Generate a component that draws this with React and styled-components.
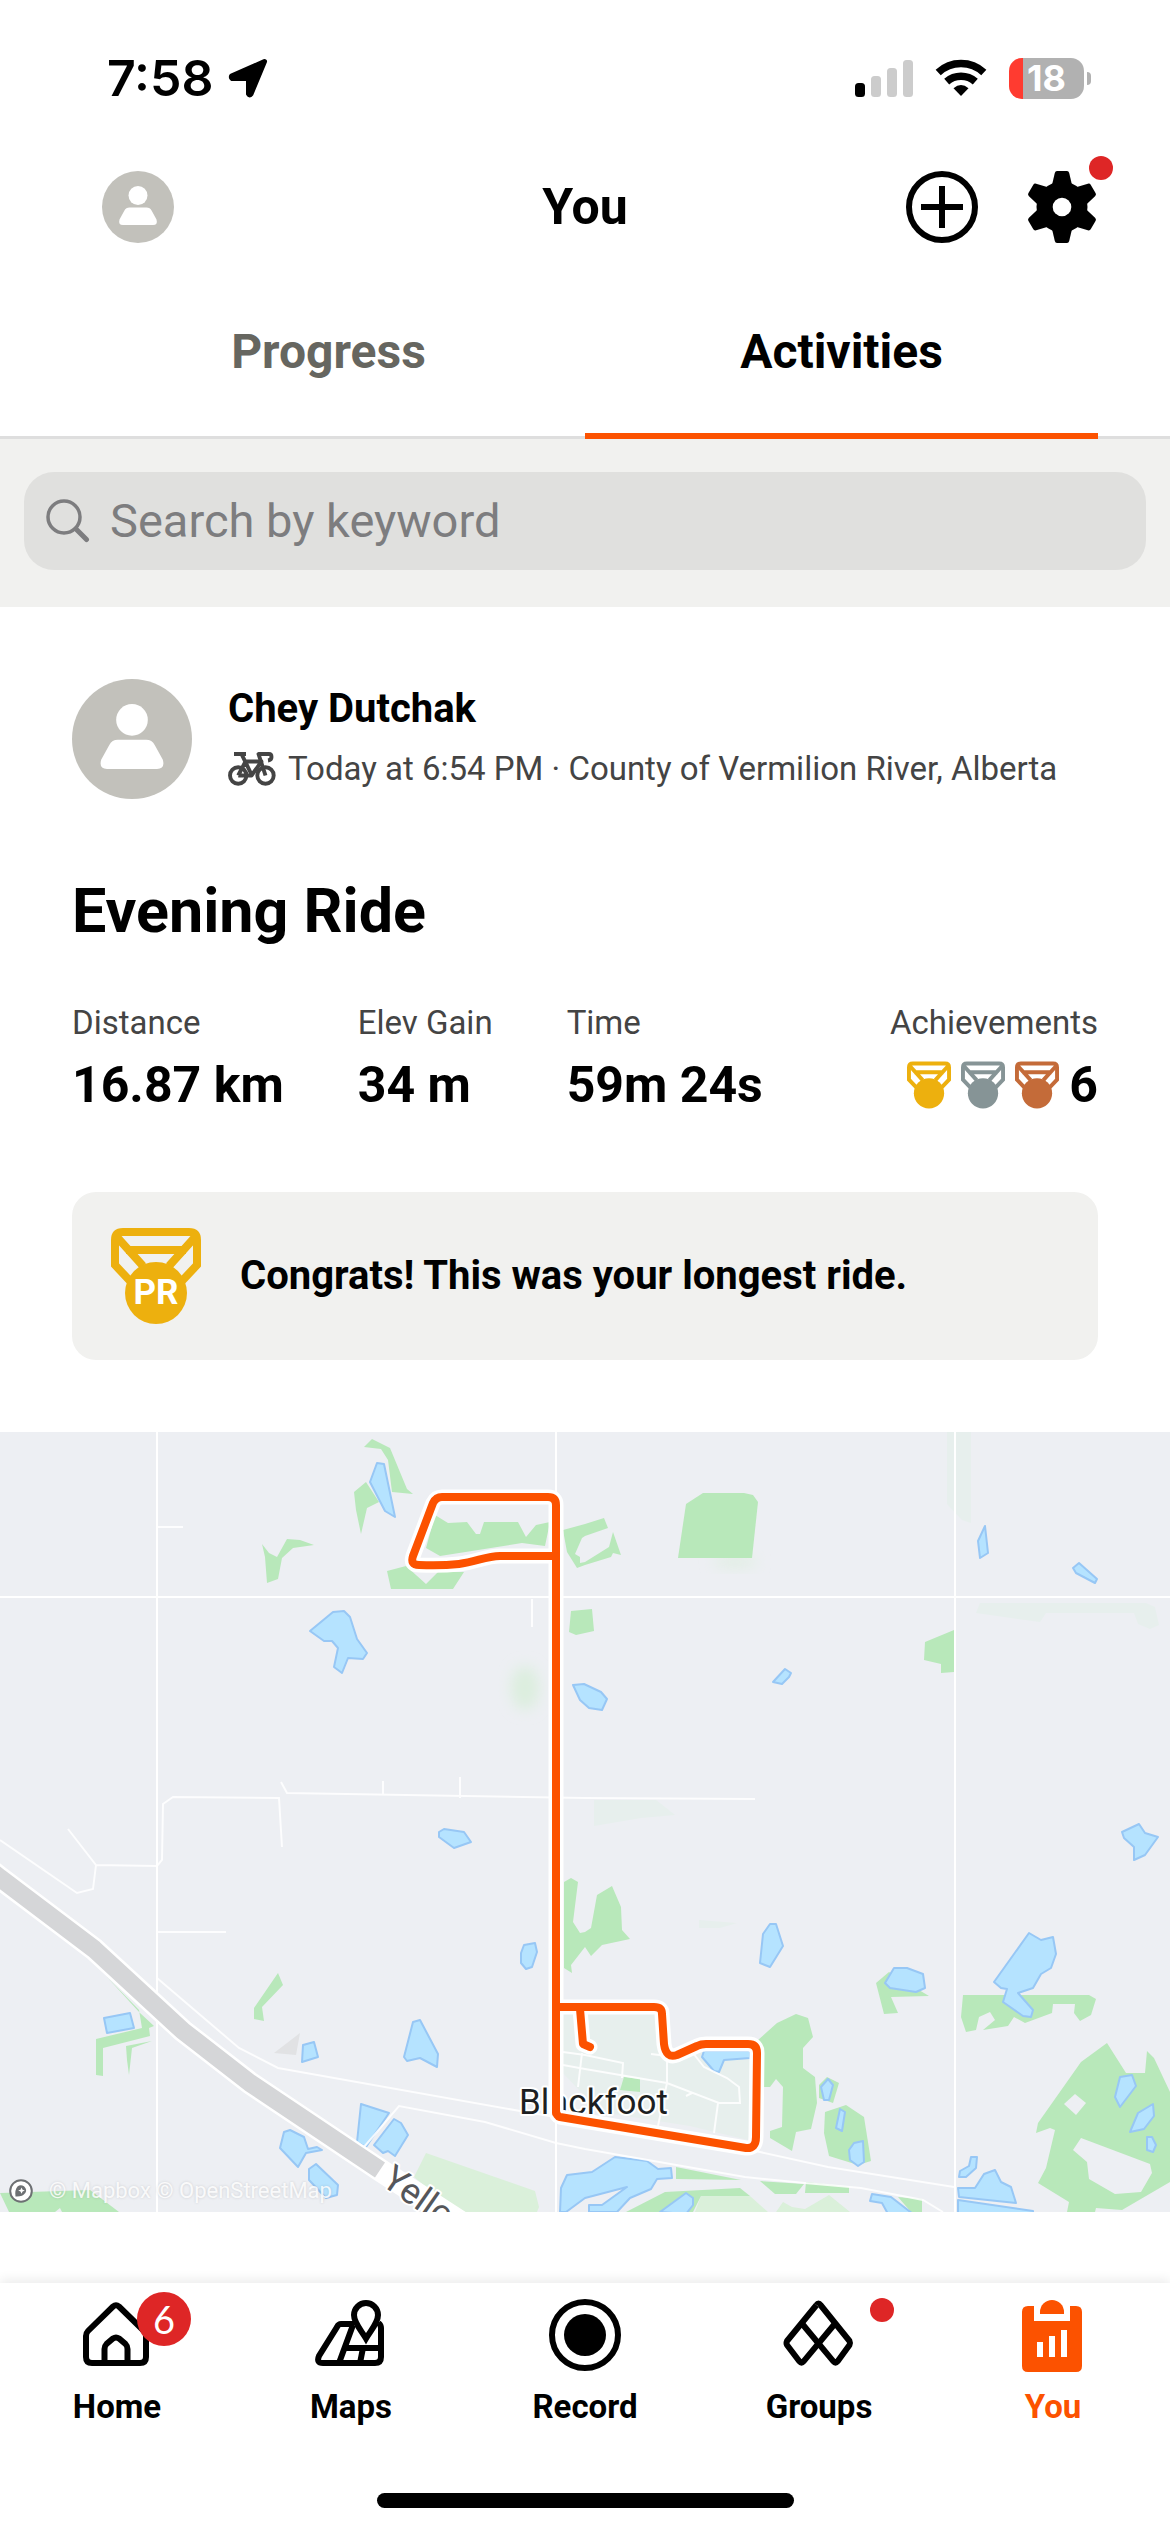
import React from 'react';
import styled, { createGlobalStyle, css } from 'styled-components';

const colors = {
  ink: '#000000',
  text: '#444444',
  muted: '#666660',
  placeholder: '#7d7d7f',
  orange: '#fc5200',
  red: '#de2626',
  gold: '#edb00e',
  silver: '#869496',
  bronze: '#c46b39',
  surface: '#f1f1ef',
  field: '#e0e0de',
  line: '#dedede',
  avatar: '#c2c1bb',
};

const GlobalStyle = createGlobalStyle`
  *, *::before, *::after {
    box-sizing: border-box;
  }

  body {
    margin: 0;
    background: #fff;
    color: ${colors.ink};
    font-family: Roboto, 'Liberation Sans', sans-serif;
  }

  h1, h2, p, dl, dd {
    margin: 0;
  }

  button, input {
    font-family: inherit;
  }
`;

const Page = styled.div`
  display: flex;
  flex-direction: column;
  min-height: 100vh;
`;

/* ---------- status bar ---------- */

const StatusBar = styled.div`
  display: flex;
  align-items: center;
  justify-content: space-between;
  height: 156px;
  padding: 0 79px 0 107px;
`;

const StatusGroup = styled.div`
  display: flex;
  align-items: center;
  gap: ${({ $gap }) => $gap}px;
`;

const Clock = styled.span`
  font-family: Inter, 'Liberation Sans', sans-serif;
  font-size: 50px;
  line-height: 60px;
  font-weight: 600;
`;

const Battery = styled.div`
  display: flex;
  align-items: center;
  gap: 3px;
`;

const BatteryBody = styled.div`
  width: 75px;
  height: 41px;
  border-radius: 13px;
  background: linear-gradient(to right, #ff3b30 14px, #b1b1b1 14px);
  color: #fff;
  font-family: Inter, 'Liberation Sans', sans-serif;
  font-size: 36px;
  font-weight: 700;
  line-height: 41px;
  text-align: center;
`;

const BatteryTip = styled.div`
  width: 4px;
  height: 13px;
  border-radius: 0 4px 4px 0;
  background: #b1b1b1;
`;

/* ---------- header ---------- */

const Header = styled.header`
  display: grid;
  grid-template-columns: 1fr auto 1fr;
  align-items: center;
  height: 102px;
  padding: 0 72px 0 102px;
`;

const HeaderTitle = styled.h1`
  padding-right: 30px;
  font-size: 50px;
  line-height: 60px;
  font-weight: 700;
`;

const HeaderActions = styled.div`
  display: flex;
  justify-content: flex-end;
  gap: 48px;
`;

const IconButton = styled.button`
  position: relative;
  display: block;
  width: 72px;
  height: 72px;
  padding: 0;
  border: 0;
  background: none;
  color: inherit;

  svg {
    display: block;
  }
`;

const Dot = styled.span`
  position: absolute;
  top: ${({ $top }) => $top}px;
  right: ${({ $right }) => $right}px;
  width: 24px;
  height: 24px;
  border-radius: 50%;
  background: ${colors.red};
`;

/* ---------- tabs ---------- */

const Tabs = styled.div`
  display: flex;
  padding: 0 72px;
  box-shadow: inset 0 -3px 0 ${colors.line};
`;

const Tab = styled.button`
  flex: 1;
  padding: 66px 0 53px;
  border: 0;
  border-bottom: 6px solid transparent;
  background: none;
  color: ${colors.muted};
  font-size: 48px;
  line-height: 56px;
  font-weight: 700;

  ${({ $active }) =>
    $active &&
    css`
      border-bottom-color: ${colors.orange};
      color: ${colors.ink};
    `}
`;

/* ---------- search ---------- */

const SearchSection = styled.div`
  padding: 33px 24px 37px;
  background: ${colors.surface};
`;

const SearchBox = styled.label`
  display: flex;
  align-items: center;
  gap: 20px;
  height: 98px;
  padding: 0 22px;
  border-radius: 30px;
  background: ${colors.field};
`;

const SearchInput = styled.input`
  flex: 1;
  min-width: 0;
  padding: 0;
  border: 0;
  outline: 0;
  background: none;
  font-size: 47px;
  line-height: 56px;

  &::placeholder {
    color: ${colors.placeholder};
    opacity: 1;
  }
`;

/* ---------- activity ---------- */

const ActivityBody = styled.div`
  padding: 72px 72px 0;
`;

const Athlete = styled.div`
  display: flex;
  align-items: center;
  gap: 36px;
`;

const AthleteText = styled.div`
  display: flex;
  flex-direction: column;
  gap: 12px;
`;

const AthleteName = styled.p`
  font-size: 40px;
  line-height: 48px;
  font-weight: 700;
`;

const AthleteMeta = styled.p`
  display: flex;
  align-items: center;
  gap: 12px;
  color: ${colors.text};
  font-size: 33px;
  line-height: 48px;
`;

const ActivityTitle = styled.h2`
  margin-top: 76px;
  font-size: 61px;
  line-height: 72px;
  font-weight: 700;
`;

const Stats = styled.dl`
  display: flex;
  gap: 74px;
  margin-top: 56px;
`;

const Stat = styled.div`
  display: flex;
  flex-direction: column;
  gap: 12px;

  &:last-child {
    align-items: flex-end;
    margin-left: auto;
  }
`;

const StatLabel = styled.dt`
  color: ${colors.text};
  font-size: 33px;
  line-height: 40px;
`;

const StatValue = styled.dd`
  display: flex;
  align-items: center;
  gap: 10px;
  font-size: 50px;
  line-height: 60px;
  font-weight: 700;
`;

const Congrats = styled.div`
  display: flex;
  align-items: center;
  gap: 39px;
  margin: 77px 0 72px;
  padding: 36px 39px;
  border-radius: 24px;
  background: ${colors.surface};
  font-size: 40px;
  line-height: 48px;
  font-weight: 700;
`;

const MapFrame = styled.div`
  position: relative;

  > svg {
    display: block;
    width: 100%;
    height: auto;
  }
`;

const Attribution = styled.p`
  position: absolute;
  left: 9px;
  bottom: 8px;
  display: flex;
  align-items: center;
  gap: 16px;
  color: rgba(255, 255, 255, 0.85);
  font-size: 22px;
  line-height: 26px;
  text-shadow: 0 0 3px rgba(0, 0, 0, 0.14);
`;

/* ---------- bottom navigation ---------- */

const BottomNav = styled.nav`
  margin-top: auto;
  padding: 16px 0 24px;
  background: #fff;
  box-shadow: 0 -4px 10px rgba(0, 0, 0, 0.07);
`;

const NavItems = styled.div`
  display: flex;
`;

const NavItem = styled.a`
  flex: 1;
  display: flex;
  flex-direction: column;
  align-items: center;
  gap: 16px;
  color: ${({ $active }) => ($active ? colors.orange : colors.ink)};
  font-size: 33px;
  line-height: 40px;
  font-weight: 700;
  text-decoration: none;
`;

const NavIcon = styled.span`
  position: relative;
  width: 72px;
  height: 72px;

  svg {
    display: block;
  }
`;

const Badge = styled.span`
  position: absolute;
  top: -7px;
  left: 56px;
  width: 54px;
  height: 54px;
  border-radius: 50%;
  background: ${colors.red};
  color: #fff;
  font-family: Lato, sans-serif;
  font-size: 38px;
  font-weight: 400;
  line-height: 54px;
  text-align: center;
`;

const HomeIndicator = styled.div`
  width: 417px;
  height: 15px;
  margin: 66px auto 0;
  border-radius: 8px;
  background: #000;
`;

/* ---------- icons ---------- */

const LocationArrow = () => (
  <svg width="40" height="40" viewBox="0 0 40 40" aria-hidden="true">
    <path
      d="M36.500 3.500 3.500 18Q3 20 4 20.500H20.500V36Q21.500 38 23 36Z"
      fill="#000"
      stroke="#000"
      strokeWidth="5"
      strokeLinejoin="round"
    />
  </svg>
);

const SignalIcon = () => (
  <svg width="58" height="37" viewBox="0 0 58 37" aria-hidden="true">
    <rect x="0" y="23" width="10" height="14" rx="3.500" fill="#000" />
    <rect x="16" y="16" width="10" height="21" rx="3.500" fill="#ccc" />
    <rect x="32" y="8" width="10" height="29" rx="3.500" fill="#ccc" />
    <rect x="48" y="0" width="10" height="37" rx="3.500" fill="#ccc" />
  </svg>
);

const WifiIcon = () => (
  <svg width="52" height="38" viewBox="0 0 52 38" aria-hidden="true">
    <g fill="none" stroke="#000" strokeWidth="7.500">
      <path d="M3.200 13.500A33.500 33.500 0 0 1 48.800 13.500" />
      <path d="M11.700 22.600A21.500 21.500 0 0 1 40.300 22.600" />
    </g>
    <path d="M26 37 18.500 29.200Q26 22.800 33.500 29.200Z" fill="#000" />
  </svg>
);

const AvatarIcon = ({ size }) => (
  <svg width={size} height={size} viewBox="0 0 72 72" aria-hidden="true">
    <circle cx="36" cy="36" r="36" fill={colors.avatar} />
    <circle cx="36" cy="24.500" r="9.500" fill="#fff" />
    <path
      d="M27.500 36.500H44.500Q48 36.500 49.700 39.700L54.500 48.500Q56 54 51 54H21Q16 54 17.500 48.500L22.300 39.700Q24 36.500 27.500 36.500Z"
      fill="#fff"
    />
  </svg>
);

const PlusIcon = () => (
  <svg width="72" height="72" viewBox="0 0 72 72" aria-hidden="true">
    <g fill="none" stroke="currentColor" strokeWidth="6">
      <circle cx="36" cy="36" r="33" />
      <path d="M36 15V57M15 36H57" />
    </g>
  </svg>
);

const GearIcon = () => (
  <svg width="72" height="72" viewBox="-36 -36 72 72" aria-hidden="true">
    <g fill="currentColor">
      {[0, 60, 120, 180, 240, 300].map((angle) => (
        <path
          key={angle}
          transform={`rotate(${angle})`}
          d="M-10 -22 -7.200 -34Q-6.700 -36 -5 -36H5Q6.700 -36 7.200 -34L10 -22Z"
        />
      ))}
      <circle r="25.500" />
    </g>
    <circle r="9.300" fill="#fff" />
  </svg>
);

const SearchIcon = () => (
  <svg width="44" height="44" viewBox="0 0 44 44" aria-hidden="true">
    <g fill="none" stroke={colors.placeholder} strokeLinecap="round">
      <circle cx="18" cy="18" r="16" strokeWidth="3.500" />
      <path d="M30 30 40.500 40.500" strokeWidth="5" />
    </g>
  </svg>
);

const BikeIcon = () => (
  <svg width="48" height="34" viewBox="0 0 48 34" aria-hidden="true">
    <g fill="none" stroke={colors.text} strokeWidth="3.900" strokeLinejoin="round">
      <circle cx="10.200" cy="23.500" r="8.200" />
      <circle cx="37.500" cy="23.500" r="8.200" />
      <path d="M6 2H18M13.500 2 23.500 22.500M10.200 23.500 17.500 9.500H33.500L23.500 23.500H10.200" />
      <path d="M37.500 23.500 30.500 2H41Q43.500 2 43.500 5Q43.500 8 40 8.500" />
    </g>
  </svg>
);

const MedalIcon = ({ width, height, color, label }) => (
  <svg width={width} height={height} viewBox="0 0 90 96" aria-hidden="true">
    <g fill="none" stroke={color} strokeWidth="8">
      <path d="M20 54 4 37V12Q4 4 12 4H78Q86 4 86 12V37L70 54" />
      <path d="M5 8 32 38M85 8 58 38M15 22H75" />
    </g>
    <circle cx="45" cy="65" r="31" fill={color} />
    {label && (
      <text
        x="45"
        y="76"
        textAnchor="middle"
        fill="#fff"
        fontFamily="Roboto, sans-serif"
        fontSize="35"
        fontWeight="700"
      >
        {label}
      </text>
    )}
  </svg>
);

const HomeIcon = () => (
  <svg width="72" height="72" viewBox="0 0 72 72" aria-hidden="true">
    <g fill="none" stroke="currentColor" strokeWidth="6">
      <path d="M5 37Q5 34 7 32L32 7.500Q35 5 38 7.500L63 32Q65 34 65 37V58Q65 64 59 64H11Q5 64 5 58Z" />
      <path d="M23.500 64V50Q23.500 47 25.500 45L32 39.500Q35 37.500 38 39.500L44.500 45Q46.500 47 46.500 50V64" />
    </g>
  </svg>
);

const MapsIcon = () => (
  <svg width="72" height="72" viewBox="0 0 72 72" aria-hidden="true">
    <g fill="none" stroke="currentColor" strokeWidth="6">
      <path d="M39 25H26Q23.500 25 22 28L4 57Q1 64 8 64H60Q66 64 66 58V29Q66 26 63.500 24" />
      <path d="M38 26 24 64M30 49H66M48 49 45 64" />
      <path d="M51 39.500C46 31 39 24 39 16A12 12 0 0 1 63 16C63 24 56 31 51 39.500Z" />
    </g>
  </svg>
);

const RecordIcon = () => (
  <svg width="72" height="72" viewBox="0 0 72 72" aria-hidden="true">
    <circle cx="36" cy="36" r="33" fill="none" stroke="currentColor" strokeWidth="6" />
    <circle cx="36" cy="36" r="21" fill="currentColor" />
  </svg>
);

const GroupsIcon = () => (
  <svg width="72" height="72" viewBox="0 0 72 72" aria-hidden="true">
    <g fill="none" stroke="currentColor" strokeWidth="6" strokeLinejoin="round">
      <path d="M33.500 6Q35.500 3 37.500 6L66.500 42Q67.500 44 66.500 46L54.500 62.500Q52.500 65 50.500 62.500L18.500 24" />
      <path d="M33.500 6 4 42Q3 44 4 46L16.500 62.500Q18.500 65 20.500 62.500L52.500 24" />
    </g>
  </svg>
);

const YouIcon = () => (
  <svg width="72" height="74" viewBox="0 0 72 74" aria-hidden="true">
    <path
      d="M11 7H17V22H53V7H59Q65 7 65 13V67Q65 73 59 73H11Q5 73 5 67V13Q5 7 11 7Z"
      fill="currentColor"
    />
    <path d="M23 15V13A12 12 0 0 1 47 13V15Z" fill="currentColor" />
    <path d="M20 43H26V58H20ZM32 37H38V58H32ZM44 31H50V58H44Z" fill="#fff" />
  </svg>
);

/* ---------- map ---------- */

const woods = [
  '364,15 372,7 390,16 407,57 413,62 392,60 388,28 381,17',
  '354,60 366,50 379,70 367,76 361,102 356,78',
  '262,112 269,121 277,125 287,107 300,108 314,113 293,116 282,126 278,147 267,151 265,125',
  '435,83 448,91 467,90 476,102 480,102 484,90 518,90 526,105 536,93 550,90 545,114 522,111 440,124 426,116',
  '387,139 406,134 426,152 438,140 464,140 453,157 391,157',
  '563,98 585,92 604,86 608,96 585,104 582,106 575,122 580,125 580,131 585,130 609,115 613,100 621,123 613,121 611,125 585,133 577,136 567,120',
  '571,179 592,177 594,199 576,203 569,200',
  '703,61 744,61 753,63 758,70 752,126 678,126 686,72',
  '954,198 925,210 924,228 941,232 941,241 954,240',
  '106,544 140,581 154,594 149,596 150,604 103,616 103,644 96,643 96,607 142,596 139,578',
  '126,614 152,609 132,616 129,643 127,628',
  '278,541 283,553 262,575 264,589 254,587 254,576',
  '0,761 90,758 119,780 62,780 60,776 55,780 9,780',
  '564,450 571,446 578,450 573,490 580,501 585,500 591,496 597,463 612,454 621,475 622,498 630,507 602,513 591,524 585,515 571,533 572,541 564,536',
  '876,551 889,540 929,564 891,565 898,581 884,582',
  '963,563 1089,563 1096,567 1091,583 1080,589 1074,581 1075,572 1053,572 1052,581 1025,591 1014,585 1008,594 983,598 995,588 990,580 979,585 976,598 966,600 961,585',
  '1107,611 1126,641 1145,641 1147,619 1154,626 1170,660 1170,750 1122,778 1096,776 1095,780 1067,780 1069,770 1038,751 1046,736 1055,698 1050,696 1036,701 1038,691 1081,630',
  '796,582 808,586 813,605 803,616 803,636 815,645 817,671 811,697 796,700 792,719 770,706 770,699 782,695 783,655 776,647 770,655 763,655 758,608 777,591',
  '827,645 839,651 833,671 819,666 819,653',
  '846,673 864,685 871,729 858,733 829,724 824,701 825,680',
  '624,645 640,647 640,660 620,658',
  '676,735 741,748 676,747',
  '760,749 804,752 796,762 775,762',
  '806,750 849,755 849,761 805,761',
  '626,780 665,760 740,756 750,764 701,764 693,780',
  '898,765 922,767 922,780 911,780',
];

const clearings = [
  '1064,672 1075,662 1086,671 1076,683',
  '1081,706 1150,732 1152,741 1141,760 1115,762 1089,747 1087,730 1073,718',
];

const meadows = [
  '426,721 535,759 539,775 537,780 455,780 414,745',
  '701,764 750,764 768,780 695,780',
  '776,780 783,770 792,775 805,777 829,763 850,780',
];

const faint = [
  '947,0 971,0 971,91 962,88 947,72',
  '976,181 980,171 1146,171 1155,175 1159,193 1150,197 1138,192 1134,181 1046,181 1040,190',
  '594,368 656,368 675,383 641,386 594,394',
  '699,488 737,491 720,496 699,496',
  '562,580 655,580 662,628 704,618 750,618 752,700 748,708 690,694 600,680 562,640',
];

const lakes = [
  '377,31 384,32 395,85 385,79 370,50',
  '310,199 333,180 344,179 350,185 357,207 367,221 363,227 348,226 342,241 334,235 338,216 332,209 324,209',
  '439,400 444,397 464,400 471,410 454,416 439,405',
  '573,253 584,252 601,260 607,267 602,278 589,276 580,268',
  '785,237 791,241 789,245 782,252 773,250',
  '985,94 988,121 980,126 978,109',
  '1079,131 1097,147 1095,151 1076,141 1073,136',
  '1122,400 1139,392 1145,401 1158,405 1145,423 1134,428 1134,415 1124,406',
  '104,586 130,581 134,596 107,601',
  '303,613 314,610 318,625 302,630',
  '413,590 420,588 438,622 437,635 420,626 407,629 404,625',
  '524,513 535,511 537,520 532,535 526,537 521,531 521,521',
  '361,672 389,681 366,715 357,710',
  '394,687 401,691 408,703 395,724 388,719 383,721 374,713',
  '284,700 290,698 304,705 308,717 317,715 322,718 306,721 298,735 280,716',
  '309,737 316,732 338,753 337,763 326,766 309,748',
  '560,780 561,756 567,743 592,740 615,725 647,729 658,737 671,736 672,746 657,747 651,757 630,766 617,780 589,780 589,773 602,773 627,755 585,766 566,780',
  '770,492 776,492 783,514 770,535 760,531 763,502',
  '894,536 907,536 923,542 925,556 916,560 890,556 885,551',
  '1029,501 1041,508 1053,505 1056,522 1051,536 1041,542 1033,556 1018,561 1033,578 1031,585 1023,584 1003,570 1007,557 1001,556 994,550',
  '1120,645 1132,643 1136,654 1120,675 1115,665',
  '1153,672 1154,684 1144,697 1130,700 1138,681',
  '1147,705 1152,705 1156,713 1153,720 1147,718',
  '971,725 977,725 976,736 966,745 959,745 960,739 969,734',
  '958,756 975,756 984,742 995,738 1001,750 1011,755 1016,771 959,765',
  '958,768 1033,779 1033,784 958,784',
  '828,647 833,653 829,668 824,668 821,655',
  '840,677 845,680 842,699 836,696',
  '863,709 864,730 858,734 850,728 849,718 854,711',
  '704,619 750,619 750,626 724,628 719,640 714,639 702,625',
  '660,780 686,761 693,766 693,773 686,782',
  '872,762 891,765 913,782 888,782 882,771 870,769',
];

const mainRoads = 'M157 0V780M0 165H1170M556 0V780M955 0V780';

const lanes = [
  'M158 95H183M532 167V195M281 350 287 361 585 366 755 367M383 349V362M460 345V366',
  'M282 415 279 366 173 365 163 372 162 428 157 434 96 433 68 397M96 433 93 457 77 461 0 408',
  'M157 500H226M157 546 239 616 278 636 520 679 585 690 760 720 828 735 954 755',
  'M364 715 399 674 485 690 556 711 585 717 745 745 805 751 861 756 923 768 943 780',
  'M563 620 585 623 623 631 622 646M563 633 585 637 667 651 719 671H740L739 655 727 646 704 635 693 621',
  'M651 622 667 624V651L658 694M718 671 714 701M582 621 578 655M692 661 686 664',
].join('');

const highway = 'M-10 438 0 446 94 517 183 599 250 651 380 738';

const route =
  'M556 681V73Q556 65 548 65H442Q436 65 433 71L413 124Q410 133 419 133Q441 134 459 132C476 130 486 124 500 124H556' +
  'M556 575H654Q662 575 662 582L664 612Q666 627 677 623L697 614Q701 612 706 612H748Q757 612 757 621L756 705Q756 717 746 716L560 685Q556 684 556 678';

const spur = 'M580 577 583 612 590 615';

const RouteMap = () => (
  <svg viewBox="0 0 1170 780" role="img" aria-label="Ride route">
    <defs>
      <filter id="haze" x="-50%" y="-50%" width="200%" height="200%">
        <feGaussianBlur stdDeviation="7" />
      </filter>
    </defs>
    <rect width="1170" height="780" fill="#edeff3" />
    <g fill="#e7efed">
      {faint.map((points) => (
        <polygon key={points} points={points} />
      ))}
    </g>
    <ellipse cx="525" cy="256" rx="14" ry="22" fill="#dceede" filter="url(#haze)" />
    <ellipse cx="735" cy="130" rx="22" ry="6" fill="#e0eee2" filter="url(#haze)" />
    <g fill="#daf0da">
      {meadows.map((points) => (
        <polygon key={points} points={points} />
      ))}
    </g>
    <g fill="#b8e8ba">
      {woods.map((points) => (
        <polygon key={points} points={points} />
      ))}
    </g>
    <g fill="#edeff3">
      {clearings.map((points) => (
        <polygon key={points} points={points} />
      ))}
    </g>
    <polygon points="300,601 296,623 274,621" fill="#e1e2e4" />
    <g fill="#b5e3ff" stroke="#97c7f5" strokeWidth="2" strokeLinejoin="round">
      {lakes.map((points) => (
        <polygon key={points} points={points} />
      ))}
    </g>
    <g fill="none" stroke="#fff">
      <path d={lanes} strokeWidth="2" opacity="0.85" />
      <path d={mainRoads} strokeWidth="2" />
      <path d={`${highway} 460 790`} strokeWidth="23" strokeLinejoin="round" />
      <path d={highway} stroke="#d5d6d8" strokeWidth="18" strokeLinejoin="round" />
    </g>
    <g
      fontFamily="Roboto, sans-serif"
      stroke="#fff"
      strokeWidth="4"
      strokeLinejoin="round"
      paintOrder="stroke"
    >
      <text transform="translate(380 752) rotate(35)" fontSize="36" fill="#55565a">
        Yello
      </text>
      <text x="519" y="682" fontSize="35" fill="#1d1f22">
        Blackfoot
      </text>
    </g>
    <g fill="none" stroke="#fff" strokeWidth="15" strokeLinejoin="round" strokeLinecap="round">
      <path d={route} />
      <path d={spur} />
    </g>
    <g
      fill="none"
      stroke={colors.orange}
      strokeWidth="8"
      strokeLinejoin="round"
      strokeLinecap="round"
    >
      <path d={route} />
      <path d={spur} />
    </g>
  </svg>
);

const MapboxMark = () => (
  <svg width="24" height="24" viewBox="0 0 24 24" aria-hidden="true">
    <circle cx="12" cy="12" r="10.800" fill="#fff" stroke="#6d7073" strokeWidth="2" />
    <path d="M6.500 17.500Q5.500 11 8.500 7.500Q11.500 5 15 7.200Q18.500 10.500 16.300 14Q13.500 18 6.500 17.500Z" fill="#6d7073" />
    <path d="M12.500 8.500 13.600 10.700 15.800 11.500 13.600 12.500 12.500 14.700 11.500 12.500 9.200 11.500 11.500 10.700Z" fill="#fff" />
  </svg>
);

const stats = [
  { label: 'Distance', value: '16.87 km' },
  { label: 'Elev Gain', value: '34 m' },
  { label: 'Time', value: '59m 24s' },
];

const navItems = [
  { label: 'Home', Icon: HomeIcon, badge: '6' },
  { label: 'Maps', Icon: MapsIcon },
  { label: 'Record', Icon: RecordIcon },
  { label: 'Groups', Icon: GroupsIcon, dot: true },
  { label: 'You', Icon: YouIcon, active: true },
];

const App = () => (
  <Page>
    <GlobalStyle />

    <StatusBar>
      <StatusGroup $gap={14}>
        <Clock>7:58</Clock>
        <LocationArrow />
      </StatusGroup>
      <StatusGroup $gap={22}>
        <SignalIcon />
        <WifiIcon />
        <Battery>
          <BatteryBody>18</BatteryBody>
          <BatteryTip />
        </Battery>
      </StatusGroup>
    </StatusBar>

    <Header>
      <IconButton aria-label="Profile">
        <AvatarIcon size={72} />
      </IconButton>
      <HeaderTitle>You</HeaderTitle>
      <HeaderActions>
        <IconButton aria-label="Add activity">
          <PlusIcon />
        </IconButton>
        <IconButton aria-label="Settings">
          <GearIcon />
          <Dot $top={-15} $right={-15} />
        </IconButton>
      </HeaderActions>
    </Header>

    <Tabs role="tablist">
      <Tab role="tab" aria-selected="false">
        Progress
      </Tab>
      <Tab role="tab" aria-selected="true" $active>
        Activities
      </Tab>
    </Tabs>

    <SearchSection>
      <SearchBox>
        <SearchIcon />
        <SearchInput type="text" placeholder="Search by keyword" aria-label="Search by keyword" />
      </SearchBox>
    </SearchSection>

    <main>
      <ActivityBody>
        <Athlete>
          <AvatarIcon size={120} />
          <AthleteText>
            <AthleteName>Chey Dutchak</AthleteName>
            <AthleteMeta>
              <BikeIcon />
              Today at 6:54 PM · County of Vermilion River, Alberta
            </AthleteMeta>
          </AthleteText>
        </Athlete>

        <ActivityTitle>Evening Ride</ActivityTitle>

        <Stats>
          {stats.map((stat) => (
            <Stat key={stat.label}>
              <StatLabel>{stat.label}</StatLabel>
              <StatValue>{stat.value}</StatValue>
            </Stat>
          ))}
          <Stat>
            <StatLabel>Achievements</StatLabel>
            <StatValue>
              <MedalIcon width={44} height={48} color={colors.gold} />
              <MedalIcon width={44} height={48} color={colors.silver} />
              <MedalIcon width={44} height={48} color={colors.bronze} />
              6
            </StatValue>
          </Stat>
        </Stats>

        <Congrats>
          <MedalIcon width={90} height={96} color={colors.gold} label="PR" />
          <p>Congrats! This was your longest ride.</p>
        </Congrats>
      </ActivityBody>

      <MapFrame>
        <RouteMap />
        <Attribution>
          <MapboxMark />
          © Mapbox © OpenStreetMap
        </Attribution>
      </MapFrame>
    </main>

    <BottomNav>
      <NavItems>
        {navItems.map(({ label, Icon, badge, dot, active }) => (
          <NavItem key={label} href={`#${label.toLowerCase()}`} $active={active}>
            <NavIcon>
              <Icon />
              {badge && <Badge>{badge}</Badge>}
              {dot && <Dot $top={-1} $right={-39} />}
            </NavIcon>
            {label}
          </NavItem>
        ))}
      </NavItems>
      <HomeIndicator />
    </BottomNav>
  </Page>
);

export default App;
